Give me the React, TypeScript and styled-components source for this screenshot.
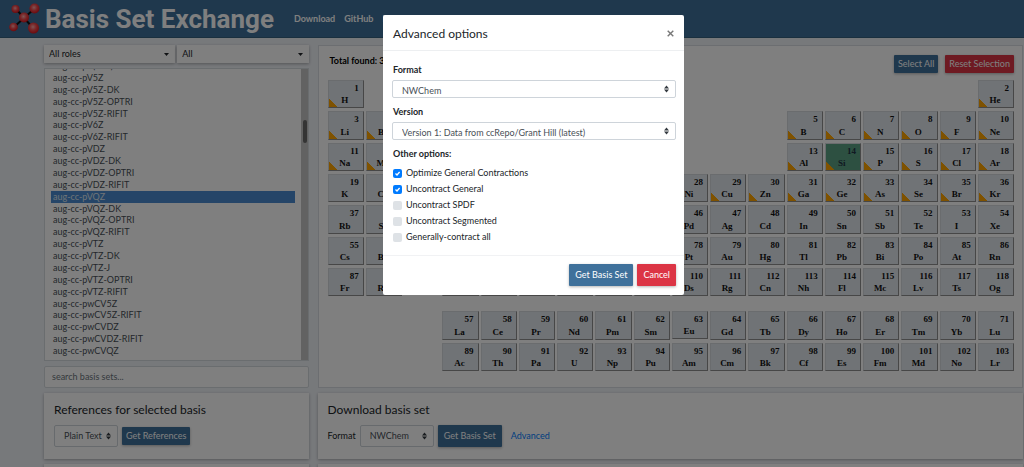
import React, { useState } from "react";
import styled, { createGlobalStyle, css } from "styled-components";

const GlobalStyle = createGlobalStyle`
  * { box-sizing: border-box; }
  html, body { height: 100%; }
  body {
    margin: 0;
    overflow: hidden;
    background: #eff2f7;
    color: #212529;
    font-family: "Lato", "Noto Sans", sans-serif;
    font-size: 9px;
    line-height: 12px;
  }
  button, input, select { font: inherit; color: inherit; margin: 0; }
  h1, h2, p, ul { margin: 0; padding: 0; }
`;

const raised = css`
  box-shadow: 0 1px 3px rgba(0, 0, 0, 0.3);
`;

/* ---------- header ---------- */

const Navbar = styled.header`
  display: flex;
  align-items: center;
  height: 38px;
  padding-left: 8px;
  background: #3f719b;
  border-bottom: 1px solid #35607f;
  color: #fff;
`;

const Brand = styled.h1`
  margin: 0 20px 0 4px;
  font-family: "Roboto", sans-serif;
  font-size: 26px;
  font-weight: 700;
  line-height: 34px;
  white-space: nowrap;
`;

const NavLinks = styled.nav`
  display: flex;
  gap: 9px;
`;

const NavLink = styled.a`
  color: #fff;
  font-weight: 700;
  text-decoration: none;
`;

/* ---------- page grid ---------- */

const Page = styled.main`
  display: grid;
  grid-template-columns: minmax(0, 3fr) minmax(0, 8fr);
  column-gap: 9px;
  row-gap: 5px;
  padding: 7px 1px 0 44px;
`;

const Column = styled.section`
  display: flex;
  flex-direction: column;
  gap: 5px;
`;

const FilterRow = styled.div`
  display: grid;
  grid-template-columns: 1fr 1fr;
  gap: 2px;
`;

const SelectBox = styled.div<{ $width?: string }>`
  position: relative;
  width: ${(p) => p.$width ?? "auto"};
  svg {
    position: absolute;
    right: 6px;
    top: 0;
    bottom: 0;
    margin: auto;
    pointer-events: none;
  }
`;

const FilterSelect = styled.select`
  display: block;
  width: 100%;
  height: 18px;
  padding: 0 5px;
  border: 0;
  background: #fff;
  appearance: none;
  ${raised}
`;

const FormSelect = styled.select<{ $tall?: boolean }>`
  display: block;
  width: 100%;
  height: ${(p) => (p.$tall ? 22 : 18)}px;
  padding: ${(p) => (p.$tall ? "0 9px" : "4px 9px 0")};
  border: 1px solid #ced4da;
  border-radius: 2px;
  background: #fff;
  color: #495057;
  appearance: none;
`;

const ListFrame = styled.div`
  display: flex;
  flex: 1;
  min-height: 0;
  border: 1px solid #d5dadf;
  background: #fff;
  overflow: hidden;
`;

const BasisList = styled.ul`
  display: grid;
  grid-auto-rows: 1fr;
  flex: 1;
  height: 297px;
  margin: -9px 6px 0;
  list-style: none;
`;

const BasisItem = styled.li<{ $active: boolean }>`
  min-height: 0;
  padding: 0 2px;
  color: ${(p) => (p.$active ? "#dfe6ee" : "#495057")};
  background: ${(p) => (p.$active ? "#4a8bd0" : "transparent")};
`;

const ScrollTrack = styled.div`
  width: 7px;
  padding: 51px 1px 0 2px;
  background: #c4c4c4;
`;

const ScrollThumb = styled.div`
  height: 23px;
  border-radius: 2px;
  background: #686868;
`;

const SearchInput = styled.input`
  width: 100%;
  height: 22px;
  padding: 0 7px;
  border: 1px solid #d5dadf;
  border-radius: 2px;
  background: #fff;
  &::placeholder { color: #6c757d; opacity: 1; }
`;

/* ---------- periodic table ---------- */

const TablePanel = styled.section`
  padding: 9px 8px 16px 9px;
  border: 1px solid #d9dde2;
  background: #fff;
`;

const PanelHead = styled.div`
  display: flex;
  align-items: flex-start;
  gap: 7px;
  height: 25px;
`;

const Total = styled.p`
  flex: 1;
  padding-left: 2px;
  font-weight: 700;
  color: #000;
`;

const Button = styled.button<{ $danger?: boolean; $small?: boolean }>`
  height: ${(p) => (p.$small ? 18 : 22)}px;
  padding: 0 ${(p) => (p.$small ? 4 : 6)}px;
  border: 0;
  border-radius: 1px;
  background: ${(p) => (p.$danger ? "#dc3545" : "#3f719b")};
  color: #fff;
  white-space: nowrap;
  ${raised}
`;

const PeriodicGrid = styled.div`
  display: grid;
  grid-template-columns: repeat(18, minmax(0, 1fr));
  grid-template-rows: repeat(7, auto) 9px repeat(2, auto);
  column-gap: 2px;
  row-gap: 3px;
`;

const Cell = styled.button<{ $col: number; $row: number; $has: boolean; $picked: boolean }>`
  grid-column: ${(p) => p.$col};
  grid-row: ${(p) => p.$row};
  display: flex;
  flex-direction: column;
  justify-content: space-between;
  aspect-ratio: 32 / 25;
  padding: 2px 4px 2px 2px;
  border: 1px solid;
  border-color: #d4d8dc #8f8f8f #8f8f8f #d4d8dc;
  background-color: ${(p) => (p.$picked ? "#5aa083" : "#e1e7ed")};
  background-image: ${(p) =>
    p.$has ? "linear-gradient(45deg, #ffa500 6px, transparent 6px)" : "none"};
  color: ${(p) => (p.$picked ? "#234" : "#111")};
  font-family: "Liberation Serif", serif;
  font-size: 9px;
  font-weight: 700;
  line-height: 10px;
`;

const Num = styled.span`
  align-self: flex-end;
`;

const Sym = styled.span`
  align-self: center;
`;

/* ---------- cards ---------- */

const Card = styled.section`
  padding: 10px;
  background: #fff;
  ${raised}
`;

const CardTitle = styled.h2`
  margin-bottom: 8px;
  font-size: 12px;
  font-weight: 400;
  line-height: 14px;
`;

const FormRow = styled.div`
  display: flex;
  align-items: center;
  gap: 4px;
  padding-bottom: 2px;
`;

const Link = styled.a`
  margin-left: 5px;
  color: #007bff;
  text-decoration: none;
`;

/* ---------- dialog ---------- */

const Backdrop = styled.div`
  position: fixed;
  inset: 0;
  display: flex;
  justify-content: center;
  align-items: flex-start;
  padding: 15px 0 0 43px;
  background: rgba(0, 0, 0, 0.5);
`;

const Dialog = styled.section`
  width: 301px;
  border-radius: 2px;
  background: #fff;
`;

const DialogHead = styled.header`
  display: flex;
  align-items: center;
  justify-content: space-between;
  height: 36px;
  padding: 2px 10px 0;
  border-bottom: 1px solid #edeff1;
`;

const DialogTitle = styled.h2`
  font-size: 12px;
  font-weight: 400;
  line-height: 18px;
`;

const CloseButton = styled.button`
  display: flex;
  padding: 0;
  border: 0;
  background: none;
  color: #777;
`;

const DialogBody = styled.div`
  padding: 13px 8px 10px 9px;
`;

const FieldLabel = styled.label`
  display: block;
  margin-bottom: 4px;
  padding-left: 1px;
  font-weight: 700;
`;

const Field = styled.div`
  margin-bottom: 8px;
`;

const Options = styled.fieldset`
  margin: 0;
  padding: 0;
  border: 0;
`;

const OptionsLegend = styled.legend`
  padding: 0 0 5px 1px;
  font-weight: 700;
`;

const Option = styled.label`
  display: flex;
  align-items: center;
  gap: 4px;
  height: 16px;
  padding-left: 1px;
`;

const Check = styled.span`
  position: relative;
  display: flex;
  svg {
    position: absolute;
    inset: 0;
    pointer-events: none;
  }
`;

const CheckInput = styled.input`
  width: 9px;
  height: 9px;
  border-radius: 2px;
  appearance: none;
  background: #dee2e6;
  &:checked { background: #007bff; }
`;

const DialogFoot = styled.footer`
  display: flex;
  justify-content: flex-end;
  gap: 4px;
  padding: 8px 8px 9px;
  border-top: 1px solid #f1f2f4;
`;

/* ---------- drawings ---------- */

const UpDown = () => (
  <svg width="7" height="8" viewBox="0 0 7 8" aria-hidden="true">
    <path d="M1 3.4 3.5 0.6 6 3.4ZM1 4.6 3.5 7.4 6 4.6Z" fill="#343a40" />
  </svg>
);

const Caret = () => (
  <svg width="5" height="3" viewBox="0 0 5 3" aria-hidden="true">
    <path d="M0 0H5L2.5 3Z" fill="#212529" />
  </svg>
);

const Molecule = () => (
  <svg width="33" height="32" viewBox="0 0 33 32" aria-hidden="true">
    <defs>
      <radialGradient id="atom" cx="0.45" cy="0.4" r="0.6">
        <stop offset="0" stopColor="#ffa8a8" />
        <stop offset="0.5" stopColor="#f04a4e" />
        <stop offset="1" stopColor="#d8141b" />
      </radialGradient>
    </defs>
    <path d="M8 6 25 25M26 6 6 24" stroke="#111" strokeWidth="2" />
    <circle cx="7.5" cy="6" r="4" fill="url(#atom)" />
    <circle cx="26.5" cy="5.5" r="5" fill="url(#atom)" />
    <circle cx="16" cy="14.5" r="5" fill="url(#atom)" />
    <circle cx="5.5" cy="24" r="4.3" fill="url(#atom)" />
    <circle cx="25.5" cy="25" r="5.5" fill="url(#atom)" />
  </svg>
);

/* ---------- data ---------- */

const basisSets = [
  "aug-cc-pV(T+d)Z", "aug-cc-pV5Z", "aug-cc-pV5Z-DK", "aug-cc-pV5Z-OPTRI", "aug-cc-pV5Z-RIFIT",
  "aug-cc-pV6Z", "aug-cc-pV6Z-RIFIT", "aug-cc-pVDZ", "aug-cc-pVDZ-DK", "aug-cc-pVDZ-OPTRI",
  "aug-cc-pVDZ-RIFIT", "aug-cc-pVQZ", "aug-cc-pVQZ-DK", "aug-cc-pVQZ-OPTRI", "aug-cc-pVQZ-RIFIT",
  "aug-cc-pVTZ", "aug-cc-pVTZ-DK", "aug-cc-pVTZ-J", "aug-cc-pVTZ-OPTRI", "aug-cc-pVTZ-RIFIT",
  "aug-cc-pwCV5Z", "aug-cc-pwCV5Z-RIFIT", "aug-cc-pwCVDZ", "aug-cc-pwCVDZ-RIFIT", "aug-cc-pwCVQZ",
];

const symbols = (
  "H He Li Be B C N O F Ne Na Mg Al Si P S Cl Ar K Ca Sc Ti V Cr Mn Fe Co Ni Cu Zn Ga Ge As Se Br Kr " +
  "Rb Sr Y Zr Nb Mo Tc Ru Rh Pd Ag Cd In Sn Sb Te I Xe Cs Ba La Ce Pr Nd Pm Sm Eu Gd Tb Dy Ho Er Tm Yb Lu " +
  "Hf Ta W Re Os Ir Pt Au Hg Tl Pb Bi Po At Rn Fr Ra Ac Th Pa U Np Pu Am Cm Bk Cf Es Fm Md No Lr " +
  "Rf Db Sg Bh Hs Mt Ds Rg Cn Nh Fl Mc Lv Ts Og"
).split(" ");

function place(z: number): [number, number] {
  if (z === 1) return [1, 1];
  if (z === 2) return [18, 1];
  if (z <= 10) return [z <= 4 ? z - 2 : z + 8, 2];
  if (z <= 18) return [z <= 12 ? z - 10 : z, 3];
  if (z <= 36) return [z - 18, 4];
  if (z <= 54) return [z - 36, 5];
  if (z <= 56) return [z - 54, 6];
  if (z <= 71) return [z - 53, 9];
  if (z <= 86) return [z - 68, 6];
  if (z <= 88) return [z - 86, 7];
  if (z <= 103) return [z - 85, 10];
  return [z - 100, 7];
}

const hasBasis = (z: number) => z <= 18 || (z >= 29 && z <= 36);

const optionNames = [
  "Optimize General Contractions",
  "Uncontract General",
  "Uncontract SPDF",
  "Uncontract Segmented",
  "Generally-contract all",
];

export default function App() {
  const [selected, setSelected] = useState("aug-cc-pVQZ");
  const [picked, setPicked] = useState<number[]>([14]);
  const [checked, setChecked] = useState([true, true, false, false, false]);

  const toggleElement = (z: number) =>
    setPicked((p) => (p.includes(z) ? p.filter((n) => n !== z) : [...p, z]));

  return (
    <>
      <GlobalStyle />
      <Navbar>
        <Molecule />
        <Brand>Basis Set Exchange</Brand>
        <NavLinks>
          <NavLink href="#download">Download</NavLink>
          <NavLink href="#github">GitHub</NavLink>
          <NavLink href="#feedback">Feedback</NavLink>
          <NavLink href="#about">About</NavLink>
          <NavLink href="#help">Help</NavLink>
        </NavLinks>
      </Navbar>

      <Page>
        <Column>
          <FilterRow>
            <SelectBox>
              <FilterSelect aria-label="Role"><option>All roles</option></FilterSelect>
              <Caret />
            </SelectBox>
            <SelectBox>
              <FilterSelect aria-label="Family"><option>All</option></FilterSelect>
              <Caret />
            </SelectBox>
          </FilterRow>
          <ListFrame>
            <BasisList role="listbox" aria-label="Basis sets">
              {basisSets.map((name) => (
                <BasisItem
                  key={name}
                  role="option"
                  aria-selected={name === selected}
                  $active={name === selected}
                  onClick={() => setSelected(name)}
                >
                  {name}
                </BasisItem>
              ))}
            </BasisList>
            <ScrollTrack><ScrollThumb /></ScrollTrack>
          </ListFrame>
          <SearchInput type="text" aria-label="Search basis sets" placeholder="search basis sets..." />
        </Column>

        <TablePanel>
          <PanelHead>
            <Total>Total found: 362 basis sets</Total>
            <Button type="button" $small>Select All</Button>
            <Button type="button" $small $danger onClick={() => setPicked([])}>Reset Selection</Button>
          </PanelHead>
          <PeriodicGrid>
            {symbols.map((symbol, i) => {
              const z = i + 1;
              const [col, row] = place(z);
              return (
                <Cell
                  key={symbol}
                  type="button"
                  $col={col}
                  $row={row}
                  $has={hasBasis(z)}
                  $picked={picked.includes(z)}
                  onClick={() => toggleElement(z)}
                >
                  <Num>{z}</Num>
                  <Sym>{symbol}</Sym>
                </Cell>
              );
            })}
          </PeriodicGrid>
        </TablePanel>

        <Card>
          <CardTitle>References for selected basis</CardTitle>
          <FormRow>
            <SelectBox $width="64px">
              <FormSelect $tall aria-label="Reference format"><option>Plain Text</option></FormSelect>
              <UpDown />
            </SelectBox>
            <Button type="button" $small>Get References</Button>
          </FormRow>
        </Card>
        <Card>
          <CardTitle>Download basis set</CardTitle>
          <FormRow>
            <label htmlFor="download-format">Format</label>
            <SelectBox $width="74px">
              <FormSelect $tall id="download-format"><option>NWChem</option></FormSelect>
              <UpDown />
            </SelectBox>
            <Button type="button">Get Basis Set</Button>
            <Link href="#advanced">Advanced</Link>
          </FormRow>
        </Card>
        <Card />
        <Card />
      </Page>

      <Backdrop>
        <Dialog role="dialog" aria-modal="true" aria-labelledby="dialog-title">
          <DialogHead>
            <DialogTitle id="dialog-title">Advanced options</DialogTitle>
            <CloseButton type="button" aria-label="Close">
              <svg width="7" height="7" viewBox="0 0 7 7" aria-hidden="true">
                <path d="M0.7 0.7 6.3 6.3M6.3 0.7 0.7 6.3" stroke="currentColor" strokeWidth="1.4" />
              </svg>
            </CloseButton>
          </DialogHead>
          <DialogBody>
            <Field>
              <FieldLabel htmlFor="format">Format</FieldLabel>
              <SelectBox>
                <FormSelect id="format"><option>NWChem</option></FormSelect>
                <UpDown />
              </SelectBox>
            </Field>
            <Field>
              <FieldLabel htmlFor="version">Version</FieldLabel>
              <SelectBox>
                <FormSelect id="version">
                  <option>Version 1: Data from ccRepo/Grant Hill (latest)</option>
                </FormSelect>
                <UpDown />
              </SelectBox>
            </Field>
            <Options>
              <OptionsLegend>Other options:</OptionsLegend>
              {optionNames.map((name, i) => (
                <Option key={name}>
                  <Check>
                    <CheckInput
                      type="checkbox"
                      checked={checked[i]}
                      onChange={() => setChecked((c) => c.map((v, j) => (j === i ? !v : v)))}
                    />
                    {checked[i] && (
                      <svg width="9" height="9" viewBox="0 0 9 9" aria-hidden="true">
                        <path d="M2.5 4.5 4 6 6.6 3" fill="none" stroke="#fff" strokeWidth="1.3" />
                      </svg>
                    )}
                  </Check>
                  {name}
                </Option>
              ))}
            </Options>
          </DialogBody>
          <DialogFoot>
            <Button type="button">Get Basis Set</Button>
            <Button type="button" $danger>Cancel</Button>
          </DialogFoot>
        </Dialog>
      </Backdrop>
    </>
  );
}
